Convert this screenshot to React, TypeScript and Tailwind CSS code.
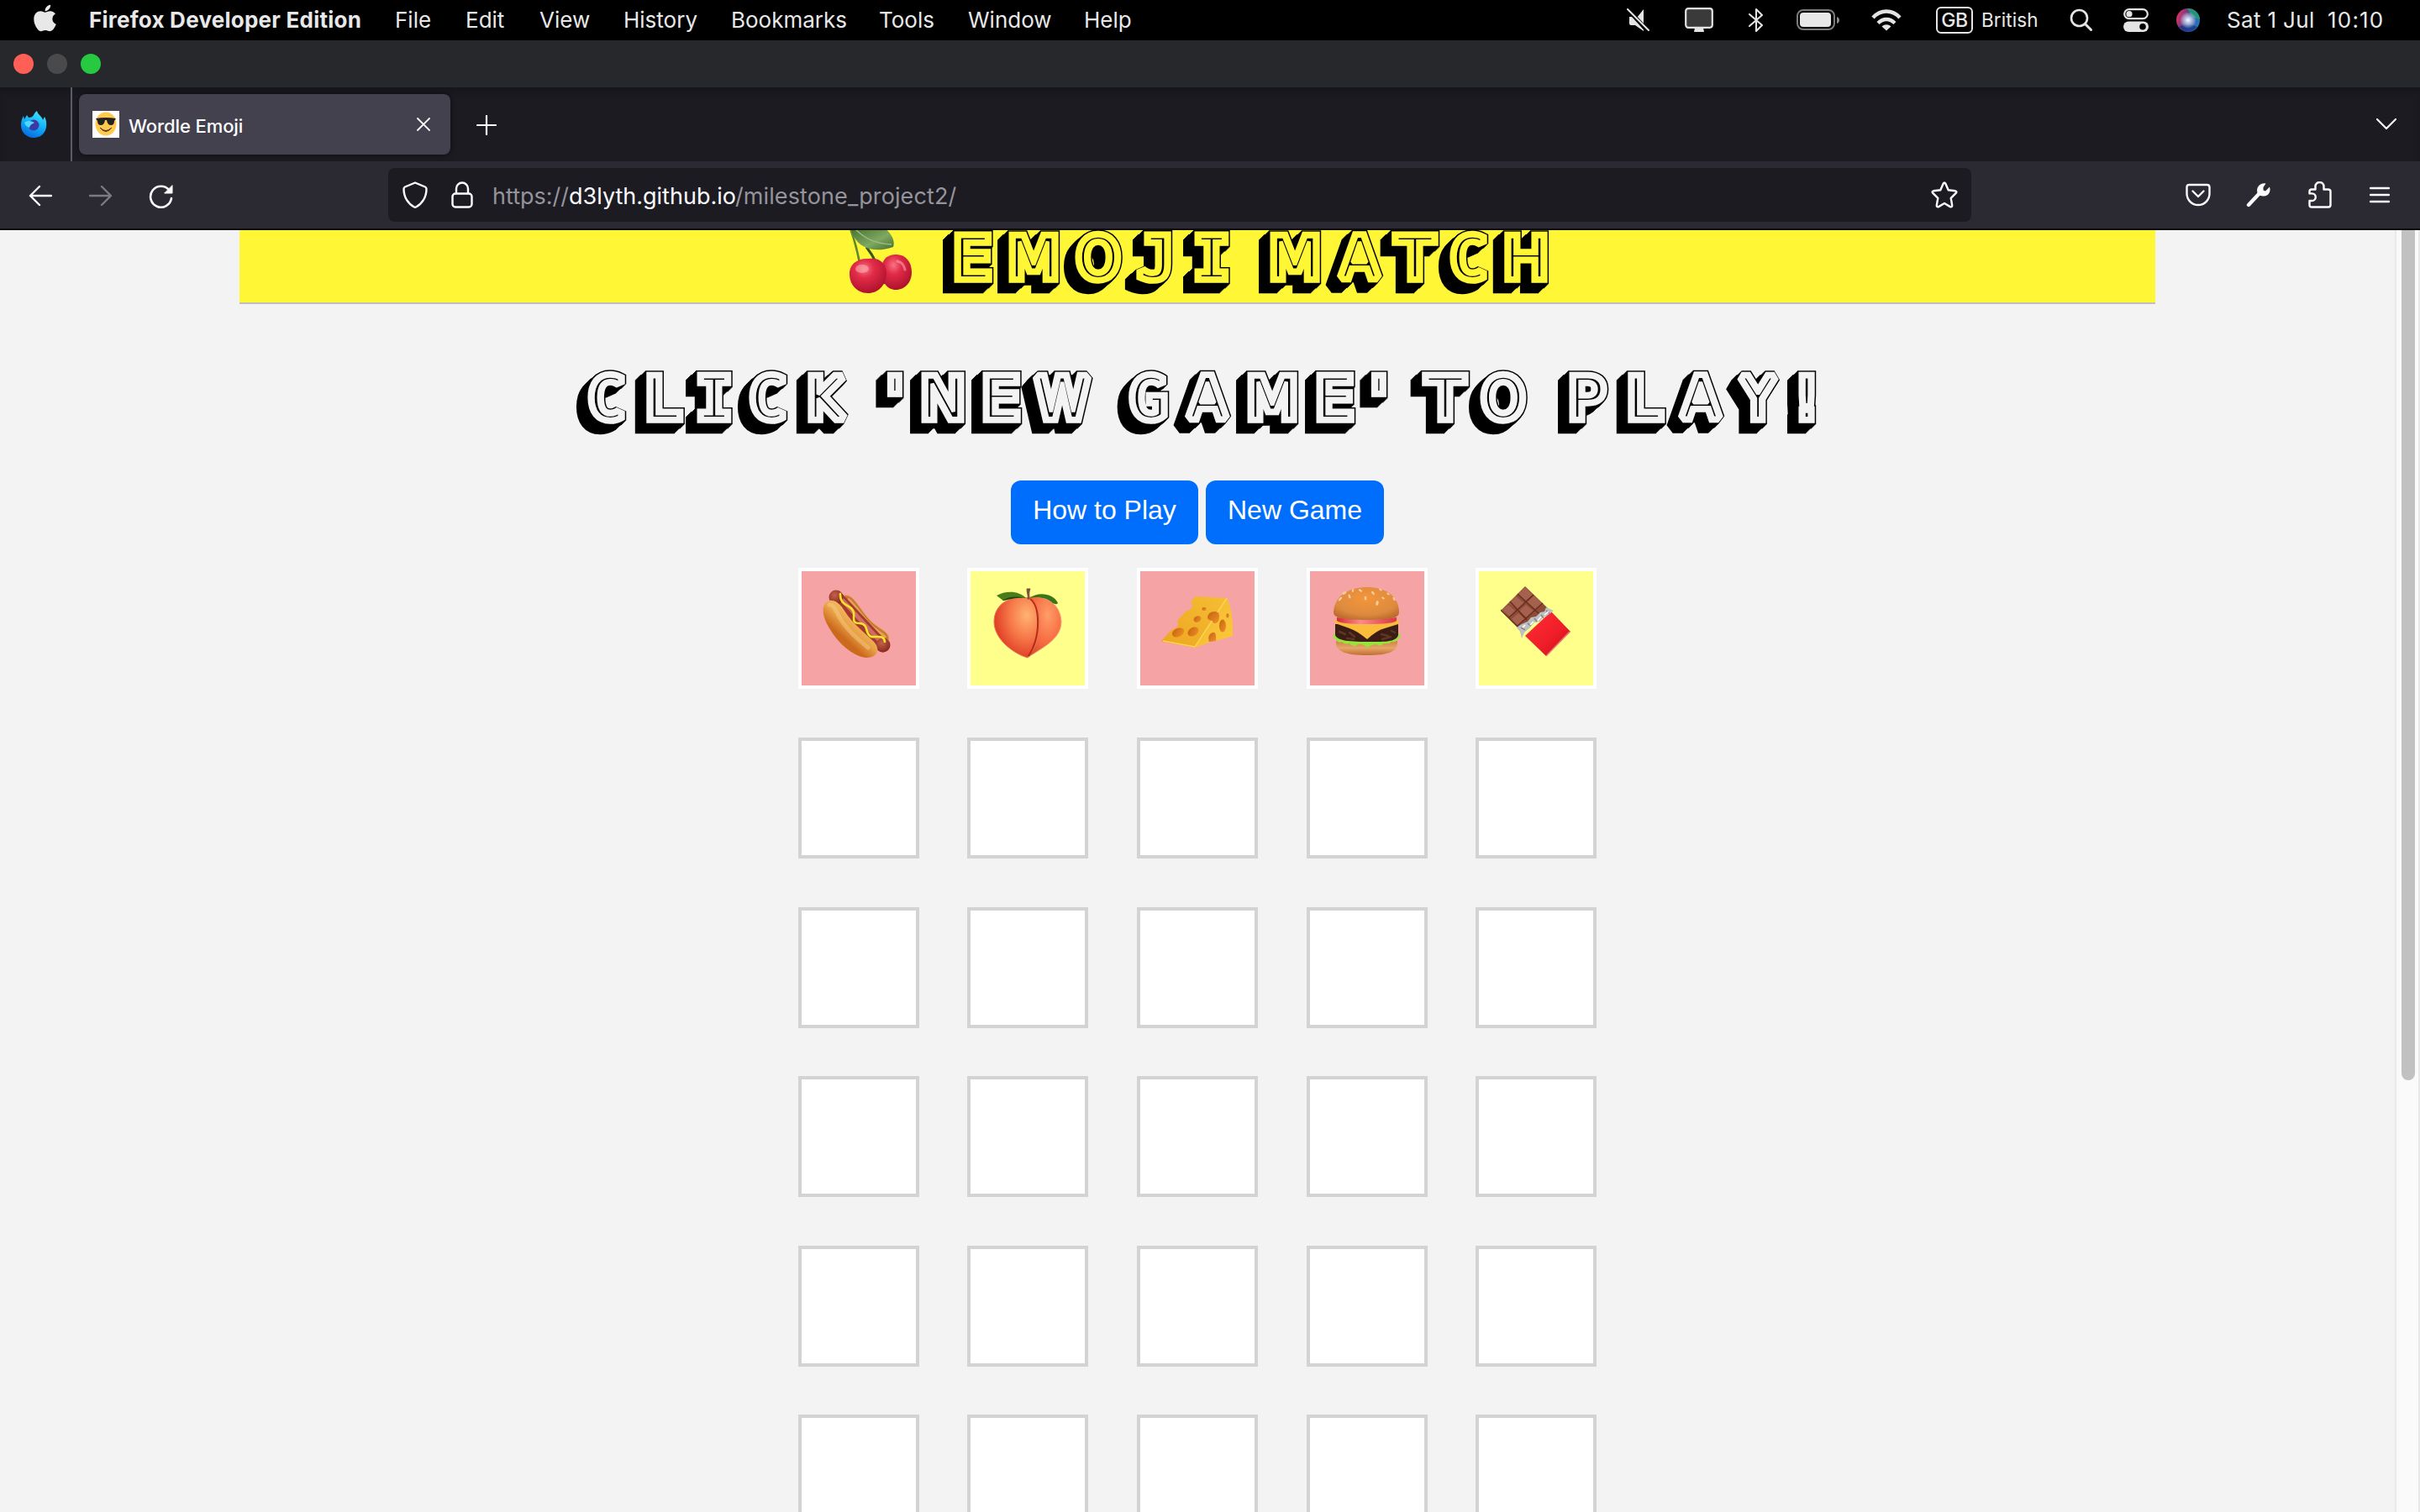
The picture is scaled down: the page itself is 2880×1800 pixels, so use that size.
import React from "react";
import { FaApple } from "react-icons/fa";

type Glyph = [string, number];

const TITLE: Glyph[] = [
  ["E", 1157], ["M", 1230], ["O", 1307], ["J", 1376], ["I", 1442], [" ", 1490],
  ["M", 1541], ["A", 1618], ["T", 1684], ["C", 1748], ["H", 1816],
];

const MESSAGE: Glyph[] = [
  ["C", 722], ["L", 788], ["I", 850], ["C", 914], ["K", 982], [" ", 1030],
  ["'", 1065], ["N", 1122], ["E", 1191], ["W", 1264], [" ", 1315],
  ["G", 1367], ["A", 1437], ["M", 1514], ["E", 1588], ["'", 1641], [" ", 1670],
  ["T", 1720], ["O", 1789], [" ", 1830],
  ["P", 1888], ["L", 1956], ["A", 2024], ["Y", 2092], ["!", 2150],
];

const faceFor = (ch: string) => {
  if ("IJCG".includes(ch)) return "'DejaVu Sans Mono', monospace";
  if ("AOYKW".includes(ch)) return "'DejaVu Sans Condensed', 'DejaVu Sans', sans-serif";
  return "'DejaVu Sans', sans-serif";
};

const DEPTH = Array.from({ length: 12 }, (_, i) => 12 - i);
const STRETCH = 1.05;

/* Inline display lettering with an extruded block shadow. */
function ShadeText({ id, glyphs, paper, left, width }: { id: string; glyphs: Glyph[]; paper: string; left: number; width: number }) {
  return (
    <svg
      width={width}
      height={86}
      viewBox={`${left / STRETCH} 0 ${width / STRETCH} 86`}
      preserveAspectRatio="none"
      strokeLinejoin="miter"
      strokeMiterlimit={1.5}
      className="block shrink-0 overflow-visible"
    >
      <g fill="#000" stroke="#000" strokeWidth={14.5}>
        {DEPTH.map((d) => (
          <use key={d} href={`#${id}`} x={-d / STRETCH} y={d * 0.9} />
        ))}
        <use href={`#${id}`} />
      </g>
      <g fill={paper} stroke={paper} strokeWidth={11.6}>
        <use href={`#${id}`} />
      </g>
      <g fill="#000" stroke={paper} strokeWidth={4.2}>
        <text id={id} fontSize={67} y={57} textAnchor="middle" xmlSpace="preserve">
          {glyphs.map(([ch, x], i) => (
            <tspan key={i} x={x / STRETCH} fontFamily={faceFor(ch)}>{ch}</tspan>
          ))}
        </text>
      </g>
    </svg>
  );
}

function Cherry() {
  return (
    <svg width="76" height="76" viewBox="0 0 76 76" className="block shrink-0">
      <defs>
        <radialGradient id="ch" cx=".4" cy=".3" r=".75">
          <stop offset="0" stopColor="#f77484" /><stop offset=".35" stopColor="#e22c48" /><stop offset="1" stopColor="#a90f2b" />
        </radialGradient>
        <linearGradient id="leaf" x1="0" y1="0" x2="1" y2="1">
          <stop offset="0" stopColor="#3e6e2c" /><stop offset=".6" stopColor="#7fa860" /><stop offset="1" stopColor="#44702f" />
        </linearGradient>
      </defs>
      <path d="M1-2C6 12 13 38 15 62" stroke="#5f8a2c" strokeWidth="2.6" fill="none" />
      <path d="M20 20C28 30 36 46 42 64" stroke="#34571d" strokeWidth="3" fill="none" />
      <path d="M2-1C8 22 28 28 52 20C55 12 48 2 42-2L2-4Z" fill="url(#leaf)" />
      <path d="M6-2C18 10 30 16 50 17" stroke="#9dbb82" strokeWidth="1.4" fill="none" />
      <path d="M54 29C66 28 74 37 74 50C74 62 66 71 55 71C45 71 38 62 38 48C38 36 43 30 54 29Z" fill="url(#ch)" />
      <path d="M23 34C36 32 44 40 44 52C43 66 34 75 22 75C9 75 0 65 0 52C0 40 10 33 23 34Z" fill="url(#ch)" />
      <ellipse cx="15" cy="46" rx="8" ry="5" fill="#fbb" opacity=".5" />
      <path d="M57 37c5 1 8 5 9 10" stroke="#f9a0aa" strokeWidth="3" fill="none" opacity=".6" strokeLinecap="round" />
    </svg>
  );
}

function HotDog() {
  return (
    <svg width="82" height="84" viewBox="0 0 82 84">
      <defs>
        <linearGradient id="bunA" gradientUnits="userSpaceOnUse" x1="44" y1="36" x2="24" y2="58">
          <stop offset="0" stopColor="#f3bd66" /><stop offset=".5" stopColor="#e9a247" /><stop offset="1" stopColor="#cb6a1c" />
        </linearGradient>
        <radialGradient id="saus" cx=".4" cy=".35" r=".7"><stop offset="0" stopColor="#c4614c" /><stop offset="1" stopColor="#85261b" /></radialGradient>
      </defs>
      <path d="M26 8C36 5 44 24 56 37C68 49 78 50 79 59C78 65 68 63 56 50L26 20Z" fill="#c9792f" stroke="#e0a25a" strokeWidth="1" />
      <path d="M30 12C40 20 48 36 60 46C66 51 72 54 75 58" stroke="#e4a25c" strokeWidth="3" fill="none" />
      <path d="M17 10L71 68" stroke="#a5392c" strokeWidth="15" strokeLinecap="round" />
      <path d="M24 14L70 64" stroke="#cf6c63" strokeWidth="5" strokeLinecap="round" />
      <circle cx="16" cy="10" r="8.5" fill="url(#saus)" /><circle cx="72" cy="67" r="8.5" fill="url(#saus)" />
      <path d="M8 14C17 12 23 21 30 32C40 45 51 53 61 63C71 74 62 83 51 82C36 80 20 66 10 50C0 35-4 19 8 14Z" fill="url(#bunA)" />
      <path d="M8 19c5-1 7 6 14 18c8 13 20 23 32 33" stroke="#f8d089" strokeWidth="5" fill="none" strokeLinecap="round" opacity=".45" />
      <path d="M21 6C20 22 36 18 37 29C38 35 34 41 44 41C56 42 49 53 58 57C64 58 73 54 74 63" stroke="#fbe524" strokeWidth="2.6" fill="none" strokeLinecap="round" />
    </svg>
  );
}

function Peach() {
  return (
    <svg width="82" height="84" viewBox="0 0 82 84">
      <defs>
        <radialGradient id="pA" cx=".72" cy=".3" r=".85"><stop offset="0" stopColor="#ffb372" /><stop offset=".45" stopColor="#f67748" /><stop offset=".85" stopColor="#df3d25" /><stop offset="1" stopColor="#c7472d" /></radialGradient>
        <radialGradient id="pB" cx=".6" cy=".3" r=".8"><stop offset="0" stopColor="#ff9d68" /><stop offset=".6" stopColor="#f7693f" /><stop offset="1" stopColor="#d44b2b" /></radialGradient>
      </defs>
      <path d="M43 11C58 8 80 16 81 40C81 62 56 72 41 83Z" fill="url(#pB)" stroke="#f2a07b" strokeWidth="1" />
      <path d="M42 12C22 8 1 18 1 40C1 62 26 79 41 83C50 72 55 60 55 42C55 28 51 16 42 12Z" fill="url(#pA)" stroke="#e97853" strokeWidth="1" />
      <path d="M44 13C56 22 57 58 42 81" stroke="#b72c19" strokeWidth="2" fill="none" />
      <path d="M4 9C16 2 32 4 39 12C27 10 19 13 12 15Z" fill="#4a7d17" />
      <path d="M11 15C19 9 30 10 39 12C28 11 22 13 12 15Z" fill="#1b4210" />
      <path d="M43 12C53 4 72 6 77 18C75 20 73 19 71 18C63 11 52 10 43 12Z" fill="#3c7418" />
      <path d="M41 13C42 9 40 5 40 1L44 1C42 5 43 9 43 13Z" fill="#7d4f3c" stroke="#7d4f3c" />
    </svg>
  );
}

function Cheese() {
  return (
    <svg width="86" height="84" viewBox="-1 0 86 84">
      <defs>
        <linearGradient id="cz" x1="0" y1="1" x2="1" y2="0"><stop offset="0" stopColor="#eda61f" /><stop offset="1" stopColor="#f5bd35" /></linearGradient>
        <linearGradient id="czs" x1="0" y1="0" x2="1" y2="1"><stop offset="0" stopColor="#f6b92e" /><stop offset="1" stopColor="#f9c83b" /></linearGradient>
        <linearGradient id="hole" x1="0" y1="0" x2="1" y2="1"><stop offset="0" stopColor="#c66112" /><stop offset="1" stopColor="#ee9226" /></linearGradient>
      </defs>
      <path d="M39 12L77 14L39 73L0 66Q-1 64 2 62L10 53L17 49Q21 46 18 41L28 30L34 27Q38 23 34 19Z" fill="url(#cz)" />
      <path d="M77 14Q85 30 84 59L64 65Q65 53 60 55Q54 58 56 67L39 73Z" fill="url(#czs)" />
      <path d="M77 14L39 72M1 65L39 72" stroke="#ffd355" strokeWidth="1.4" fill="none" />
      <g fill="url(#hole)">
        <ellipse cx="19" cy="55" rx="7.500" ry="5" transform="rotate(-25 19 55)" />
        <ellipse cx="37" cy="54" rx="7" ry="5" transform="rotate(-30 37 54)" />
        <ellipse cx="42" cy="39" rx="4.600" ry="3.600" transform="rotate(-25 42 39)" />
        <ellipse cx="50" cy="27" rx="2.700" ry="2" />
        <path d="M54 38Q54 30 63 30Q68 30 68 36Q68 43 63 44Q60 44 60 41Q56 41 54 38Z" />
        <ellipse cx="72" cy="47" rx="4" ry="7.500" /><ellipse cx="78" cy="35" rx="1.600" ry="2.800" />
        <path d="M64 65Q65 53 60 55Q53 58 56 66Z" />
      </g>
    </svg>
  );
}

function Burger() {
  return (
    <svg width="82" height="84" viewBox="0 0 82 84">
      <defs>
        <radialGradient id="bn" cx=".5" cy=".35" r=".7"><stop offset="0" stopColor="#f4953b" /><stop offset=".7" stopColor="#dd8a3f" /><stop offset="1" stopColor="#b9692b" /></radialGradient>
        <linearGradient id="bt" x1="0" y1="0" x2="0" y2="1"><stop offset="0" stopColor="#cf8244" /><stop offset=".5" stopColor="#e6a467" /><stop offset="1" stopColor="#bd7030" /></linearGradient>
        <linearGradient id="tm"><stop offset="0" stopColor="#d92a35" /><stop offset=".4" stopColor="#fb8b8f" /><stop offset="1" stopColor="#dd3340" /></linearGradient>
      </defs>
      <path d="M4 65H77C78 78 66 82 41 82C16 82 3 78 4 65Z" fill="url(#bt)" />
      <path d="M2 56Q-2 61 4 63Q5 68 11 66Q15 70 20 68Q25 74 30 69Q36 68 41 73Q47 69 52 69Q56 73 61 68Q67 69 70 66Q76 67 77 63Q83 60 79 56Z" fill="#97e33b" />
      <path d="M3 45H78V58C76 67 59 66 41 66C22 66 5 65 3 58Z" fill="#3b1d14" />
      <path d="M8 54l7 3m5-2l6 5m32-3l8 2m4-6l4 2M17 62l8 1m34 0l10-3" stroke="#5f3524" strokeWidth="2.5" strokeLinecap="round" />
      <path d="M3 44Q0 41 5 40H76Q82 41 78 45L62 50Q53 52 41 63Q29 53 20 50Z" fill="#fbbc3c" />
      <path d="M5 37Q41 43 76 37V41Q72 45 41 45Q9 45 5 41Z" fill="url(#tm)" />
      <path d="M1 31C2 10 21 1 41 1C62 1 79 11 79 31C79 37 71 40 41 40C10 40 1 37 1 31Z" fill="url(#bn)" />
      <g fill="#f3cf9c"><ellipse cx="33" cy="5" rx="2.400" ry="1.300" transform="rotate(35 33 5)" /><ellipse cx="48" cy="8" rx="2.600" ry="1.300" transform="rotate(50 48 8)" /><ellipse cx="39" cy="14" rx="1.300" ry="2.600" /><ellipse cx="53" cy="20" rx="1.600" ry="3" transform="rotate(10 53 20)" /><ellipse cx="20" cy="12" rx="1.300" ry="2.600" transform="rotate(-20 20 12)" /><ellipse cx="9" cy="15" rx="1.300" ry="3" transform="rotate(40 9 15)" /><ellipse cx="14" cy="8" rx="1.300" ry="2.800" transform="rotate(60 14 8)" /><ellipse cx="24" cy="5" rx="1.100" ry="2" transform="rotate(20 24 5)" /><ellipse cx="66" cy="9" rx="2" ry="1.100" transform="rotate(40 66 9)" /><ellipse cx="60" cy="14" rx="2" ry="1.100" transform="rotate(40 60 14)" /><ellipse cx="73" cy="15" rx="1.200" ry="2.400" transform="rotate(-30 73 15)" /><ellipse cx="57" cy="4" rx="2" ry="1.100" transform="rotate(30 57 4)" /></g>
    </svg>
  );
}

function Chocolate() {
  return (
    <svg width="84" height="86" viewBox="0 0 84 86">
      <defs>
        <linearGradient id="wr" x1="0" y1="0" x2="1" y2="1"><stop offset="0" stopColor="#ff2f38" /><stop offset=".6" stopColor="#ee1d27" /><stop offset="1" stopColor="#b81019" /></linearGradient>
      </defs>
      <path d="M29 1L57 28L22 51L1 29Z" fill="#8d4c3a" />
      <g fill="#a4614d"><path d="M29 2L38 11L29 19L20 11Z" /><path d="M40 12L50 22L42 29L31 20Z" /><path d="M18 13L28 21L20 29L10 21Z" /><path d="M30 23L40 31L31 38L22 30Z" /><path d="M9 23L18 31L12 38L2 29Z" /><path d="M21 33L29 40L22 49L13 40Z" /></g>
      <path d="M0 29L22 51M11 19L31 41M20 10L46 34M39 11L9 39M50 21L19 49" stroke="#6c2d1e" strokeWidth="1.6" />
      <path d="M60 31L83 55L54 84L29 60Z" fill="url(#wr)" />
      <path d="M82 55L54 84" stroke="#f5787b" strokeWidth="1.5" />
      <path d="M54 26L63 30L55 36L50 38L47 43L40 44L34 51L28 56L25 63L23 55L19 50L25 46L32 43L36 38L42 37L47 32L52 31Z" fill="#bfc0c2" />
      <path d="M24 50l5 3m3-8l4 3m4-9l3 4m5-8l3 4m3-9l4 3" stroke="#86888b" strokeWidth="1.6" />
      <path d="M26 50l3-3m6 0l4-4m5-1l4-5m4-2l5-4" stroke="#fff" strokeWidth="1.6" />
    </svg>
  );
}

const TILES = [
  { bg: "bg-[#f5a3a4]", pad: "pt-[21px] pr-[4px]", icon: <HotDog /> },
  { bg: "bg-[#ffff8b]", pad: "pt-[20px]", icon: <Peach /> },
  { bg: "bg-[#f5a3a4]", pad: "pt-[18px]", icon: <Cheese /> },
  { bg: "bg-[#f5a3a4]", pad: "pt-[18px]", icon: <Burger /> },
  { bg: "bg-[#ffff8b]", pad: "pt-[17px]", icon: <Chocolate /> },
];

const MENUS = [
  { label: "File", w: "w-[42px]" },
  { label: "Edit", w: "w-[46px]" },
  { label: "View", w: "w-[58px]" },
  { label: "History", w: "w-[86px]" },
  { label: "Bookmarks", w: "w-[134px]" },
  { label: "Tools", w: "w-[64px]" },
  { label: "Window", w: "w-[96px]" },
  { label: "Help", w: "w-[56px]" },
];

function MenuBar() {
  return (
    <div className="flex h-12 items-center bg-black pl-[40px] pr-[38px] text-[26px] leading-[46px] text-[#e8e8e8]">
      <FaApple className="mb-[5px] h-[37px] w-[27px] shrink-0" />
      <span className="ml-[39px] w-[324px] whitespace-nowrap font-bold tracking-[0.24px]">Firefox Developer Edition</span>
      <div className="ml-[40px] flex gap-[42px]">
        {MENUS.map((m) => (
          <span key={m.label} className={`${m.w} whitespace-nowrap`}>{m.label}</span>
        ))}
      </div>
      <div className="ml-auto flex items-center">
        <svg width="28" height="28" viewBox="0 0 28 28" fill="#e4e4e4">
          <path d="M20 1V20L12 11ZM3 10H7L20 25V27L10 20H5Q3 20 3 18Z" />
          <path d="M3 3L25 27" stroke="#000" strokeWidth="5" /><path d="M1 1L26 26" stroke="#e4e4e4" strokeWidth="2" strokeLinecap="round" />
        </svg>
        <svg width="34" height="30" viewBox="0 0 34 30" className="ml-[41px]">
          <path d="M12 24h10l1 5H11Z" fill="#e4e4e4" /><rect x="1.2" y="1.2" width="31.6" height="22.6" rx="3" fill="#3a3a3a" stroke="#e4e4e4" strokeWidth="2.2" />
        </svg>
        <svg width="20" height="30" viewBox="0 0 20 30" className="ml-[41px]" fill="none" stroke="#e4e4e4" strokeWidth="2.1" strokeLinejoin="round" strokeLinecap="round">
          <path d="M2 8L17 21L10 28V2L17 9L2 22" />
        </svg>
        <svg width="52" height="26" viewBox="0 0 52 26" className="ml-[38px]">
          <rect x="1" y="1" width="44" height="23" rx="7" fill="none" stroke="#7b7b7b" strokeWidth="2" /><rect x="4" y="4" width="37" height="17" rx="4" fill="#e8e8e8" /><path d="M48 9q3 1 3 4t-3 4Z" fill="#8a8a8a" />
        </svg>
        <svg width="36" height="26" viewBox="0 0 36 26" className="ml-[37px]" fill="none" stroke="#e4e4e4" strokeWidth="4.4">
          <path d="M2 10C11 0 25 0 34 10" /><path d="M8 16.500C14 10.500 22 10.500 28 16.500" /><path d="M18 25.500L12.500 20.500C16 17.500 20 17.500 23.500 20.500Z" fill="#e4e4e4" stroke="none" />
        </svg>
        <span className="ml-[41px] flex h-8 w-[44px] items-center justify-center rounded-[6px] border-2 border-[#e4e4e4] text-[23px] font-medium leading-none tracking-[-0.5px]">GB</span>
        <span className="ml-[10px] w-[68px] whitespace-nowrap text-[22.5px] tracking-[0.1px]">British</span>
        <svg width="28" height="28" viewBox="0 0 28 28" className="ml-[37px]" fill="none" stroke="#e4e4e4" strokeWidth="2.6" strokeLinecap="round"><circle cx="11.500" cy="11.500" r="9.500" /><path d="M18.500 18.500L25.500 25.500" strokeWidth="3" /></svg>
        <svg width="30" height="28" viewBox="0 0 30 28" className="ml-[36px]">
          <rect x="1.200" y="1.200" width="27.600" height="11" rx="5.500" fill="none" stroke="#e4e4e4" strokeWidth="2.200" /><circle cx="7" cy="6.700" r="3.600" fill="#e4e4e4" />
          <rect x="0" y="15.500" width="30" height="12.500" rx="6.200" fill="#e4e4e4" /><circle cx="23" cy="21.700" r="3.800" fill="#000" />
        </svg>
        <svg width="30" height="30" viewBox="0 0 30 30" className="ml-[32px]">
          <defs>
            <linearGradient id="siri" x1="0" y1=".3" x2="1" y2=".7"><stop offset="0" stopColor="#e5325f" /><stop offset=".45" stopColor="#513a8e" /><stop offset="1" stopColor="#1f7fc4" /></linearGradient>
            <radialGradient id="siriw"><stop offset="0" stopColor="#fff" /><stop offset=".35" stopColor="#cfe8ff" stopOpacity=".8" /><stop offset="1" stopColor="#fff" stopOpacity="0" /></radialGradient>
          </defs>
          <circle cx="15" cy="15" r="14" fill="url(#siri)" /><path d="M14 1A14 14 0 0 1 29 14Q20 14 14 1Z" fill="#1f9f77" opacity=".85" /><path d="M4 23Q14 17 26 23A14 14 0 0 1 4 23Z" fill="#173a8a" opacity=".8" />
          <circle cx="15" cy="15" r="10" fill="url(#siriw)" />
        </svg>
        <span className="ml-[31px] w-[105px] whitespace-nowrap tracking-[0.35px]">Sat 1 Jul</span>
        <span className="ml-[15px] w-[72px] whitespace-nowrap tracking-[1.2px]">10:10</span>
      </div>
    </div>
  );
}

function TabStrip() {
  return (
    <div className="flex h-[88px] items-center bg-[#1c1b22] text-[#fbfbfe] shadow-[inset_0_8px_12px_-6px_rgba(0,0,0,0.35)]">
      <div className="flex h-full w-[86px] items-center border-r-2 border-[#5b5b66] pl-[24px]">
        <svg width="32" height="34" viewBox="0 0 32 34">
          <defs>
            <linearGradient id="fx" x1=".7" y1="0" x2=".3" y2="1"><stop offset="0" stopColor="#3fe6fb" /><stop offset=".5" stopColor="#12aef8" /><stop offset="1" stopColor="#0668dd" /></linearGradient>
          </defs>
          <path d="M20 1C21 6 26 7 27 12L29 8C32 13 32 21 29 26C26 31 21 33 16 33C7 33 1 26 1 18C1 14 2 10 4 7L5 11L8 6L10 9C13 9 15 8 16 6C17 4 18 2 20 1Z" fill="url(#fx)" />
          <circle cx="16" cy="18" r="6.500" fill="#3b3aa5" /><path d="M5 15C9 12 13 13 17 15C14 17 12 17 11 21C8 20 6 18 5 15Z" fill="#52d5fb" />
        </svg>
      </div>
      <div className="ml-2 flex h-[72px] w-[442px] items-center rounded-lg bg-[#42414d] pl-4 shadow-[0_0_6px_rgba(0,0,0,0.6)]">
        <svg width="32" height="32" viewBox="0 0 32 32">
          <rect width="32" height="32" fill="#fff" /><ellipse cx="16" cy="15.500" rx="12.500" ry="14" fill="#ffca4f" />
          <path d="M4 9Q16 7 28 9L26 12Q26 17 22 17Q18 17 17 11H15Q14 17 10 17Q6 17 6 12Z" fill="#222" /><path d="M9 20Q16 27 23 20Q20 24 16 24.500Q12 24 9 20Z" fill="#5c3715" stroke="#5c3715" />
        </svg>
        <span className="ml-[11px] w-[343px] whitespace-nowrap pt-[4px] text-[22px] font-medium leading-none tracking-[-0.1px]">Wordle Emoji</span>
        <svg width="16" height="16" viewBox="0 0 16 16" stroke="#fbfbfe" strokeWidth="1.800" strokeLinecap="round"><path d="M1 1L15 15M15 1L1 15" /></svg>
      </div>
      <svg width="24" height="24" viewBox="0 0 24 24" className="ml-[31px] mt-[2px]" stroke="#fbfbfe" strokeWidth="2.200" strokeLinecap="round"><path d="M12 1V23M1 12H23" /></svg>
      <svg width="24" height="14" viewBox="0 0 24 14" className="ml-auto mr-[28px]" fill="none" stroke="#fbfbfe" strokeWidth="2.200" strokeLinecap="round" strokeLinejoin="round"><path d="M1 1L12 12L23 1" /></svg>
    </div>
  );
}

function Toolbar() {
  return (
    <div className="flex h-[82px] items-center border-b-2 border-[#0c0c0d] bg-[#2b2a33] pl-[34px] text-[#fbfbfe]">
      <svg width="28" height="26" viewBox="0 0 28 26" className="mt-[2px]" fill="none" stroke="#fbfbfe" strokeWidth="2.400" strokeLinecap="round" strokeLinejoin="round"><path d="M27 13H2M13 2L2 13L13 24" /></svg>
      <svg width="28" height="26" viewBox="0 0 28 26" className="ml-[44px] mt-[2px]" fill="none" stroke="#7c7b82" strokeWidth="2.400" strokeLinecap="round" strokeLinejoin="round"><path d="M1 13H26M15 2L26 13L15 24" /></svg>
      <svg width="30" height="30" viewBox="0 0 30 30" className="ml-[43px] mt-[4px]" fill="none" stroke="#fbfbfe" strokeWidth="2.600" strokeLinecap="round"><path d="M27 17A12.500 12.500 0 1 1 24.500 7.500" /><path d="M28 2V11H19Z" fill="#fbfbfe" strokeWidth="1" strokeLinejoin="round" /></svg>
      <div className="ml-[255px] flex h-16 w-[1884px] items-center rounded-lg bg-[#1c1b22] pl-[17px] pr-[16px]">
        <svg width="30" height="32" viewBox="0 0 30 32" fill="none" stroke="#fbfbfe" strokeWidth="2.400" strokeLinejoin="round"><path d="M15 1.500L27 6.500Q28.500 7.200 28.500 9C28.500 19 23 27 16 30.500Q15 31 14 30.500C7 27 1.500 19 1.500 9Q1.500 7.200 3 6.500Z" /></svg>
        <svg width="26" height="32" viewBox="0 0 26 32" className="ml-[28px]" fill="none" stroke="#fbfbfe" strokeWidth="2.400"><rect x="1.500" y="14.500" width="23" height="16" rx="3.500" /><path d="M6 14.500V8.500a7 7 0 0 1 14 0V14.500" /></svg>
        <div className="ml-[23px] flex whitespace-nowrap pt-[2px] text-[27px] leading-none text-[#95949b]">
          <span className="w-[91px]">https://</span><span className="w-[198px] text-[#fbfbfe]">d3lyth.github.io</span><span className="tracking-[0.1px]">/milestone_project2/</span>
        </div>
        <svg width="32" height="32" viewBox="0 0 32 32" className="ml-auto" fill="none" stroke="#fbfbfe" strokeWidth="2.400" strokeLinejoin="round"><path d="M14.700 2.500Q16 .5 17.300 2.500L20.700 10.300L29 11.300Q31.500 12 29.700 13.900L23.700 19.800L25.200 28.400Q25.200 31 22.900 30.100L16 26L9.100 30.100Q6.800 31 6.800 28.400L8.300 19.800L2.300 13.900Q.5 12 3 11.300L11.300 10.300Z" /></svg>
      </div>
      <svg width="30" height="28" viewBox="0 0 30 28" className="ml-[255px]" fill="none" stroke="#fbfbfe" strokeWidth="2.400" strokeLinejoin="round" strokeLinecap="round"><path d="M4.500 2H25.500Q28.500 2 28.500 5V12.500A13.500 13.500 0 0 1 1.500 12.500V5Q1.500 2 4.500 2Z" /><path d="M8.500 9.500L15 16L21.500 9.500" /></svg>
      <svg width="30" height="30" viewBox="0 0 30 30" className="ml-[42px]"><path d="M3 27L17 12" stroke="#fbfbfe" strokeWidth="4.400" strokeLinecap="round" /><path d="M23.500 1.500L20.500 6V9.500L23 10.500L28 5.500C30 11 26.500 17 20.500 16.500L17 16L13.500 12.500C11.500 6 17 0 23.500 1.500Z" fill="#fbfbfe" /></svg>
      <svg width="28" height="32" viewBox="0 0 28 32" className="ml-[44px]" fill="none" stroke="#fbfbfe" strokeWidth="2.400" strokeLinejoin="round"><path d="M4 9.500H8.500V6a5 5 0 0 1 10 0V9.500H23.500Q26.500 9.500 26.500 12V28Q26.500 30.500 24 30.500H4Q1.500 30.500 1.500 28V23H4.500a4.300 4.300 0 0 0 0-8.600H1.500V12Q1.500 9.500 4 9.500Z" /></svg>
      <svg width="24" height="22" viewBox="0 0 24 22" className="ml-[45px]" stroke="#fbfbfe" strokeWidth="2.300" strokeLinecap="round"><path d="M1 3H23M1 11H23M1 19H23" /></svg>
    </div>
  );
}

export default function App() {
  return (
    <div className="flex h-[1800px] w-[2880px] flex-col overflow-hidden bg-[#f3f3f3] font-['Inter',sans-serif]">
      <MenuBar />
      <div className="flex h-14 items-center gap-4 bg-[#27282b] pl-4">
        <span className="size-6 rounded-full bg-[#ff5f57]" />
        <span className="size-6 rounded-full bg-[#4a4a4d]" />
        <span className="size-6 rounded-full bg-[#26c940]" />
      </div>
      <TabStrip />
      <Toolbar />
      <div className="flex min-h-0 flex-1">
        <main className="flex w-[2850px] flex-col items-center">
          <header className="flex h-[88px] w-[2280px] border-b-2 border-[#bfbfbf] bg-[#fff635] pl-[726px]">
            <Cherry />
            <div className="ml-[30px]">
              <ShadeText id="title" glyphs={TITLE} paper="#fff635" left={1117} width={740} />
            </div>
          </header>
          <h1 className="mt-[79px] flex h-[86px]">
            <ShadeText id="message" glyphs={MESSAGE} paper="#f3f3f3" left={675} width={1500} />
          </h1>
          <div className="mt-[45px] flex gap-[9px] font-['Liberation_Sans',Arial,sans-serif] text-[32px] leading-[48px] text-white">
            <button className="h-[76px] w-[223px] whitespace-nowrap rounded-xl bg-[#006efd] pb-[6px]">How to Play</button>
            <button className="h-[76px] w-[212px] whitespace-nowrap rounded-xl bg-[#006efd] pb-[6px]">New Game</button>
          </div>
          <div className="mt-[28.4px] grid grid-cols-[repeat(5,144px)] gap-[57.6px]">
            {TILES.map((t, i) => (
              <div key={i} className={`flex h-36 justify-center border-4 border-white ${t.bg} ${t.pad}`}>{t.icon}</div>
            ))}
            {Array.from({ length: 25 }, (_, i) => (
              <div key={i} className="h-36 border-4 border-[#d3d3d3] bg-white" />
            ))}
          </div>
        </main>
        <aside className="w-[30px] border-l-2 border-r-2 border-[#e8e8e8] bg-[#fafafa] pl-[6px]">
          <div className="h-[1012px] w-4 rounded-b-full bg-[#c1c1c1]" />
        </aside>
      </div>
    </div>
  );
}
